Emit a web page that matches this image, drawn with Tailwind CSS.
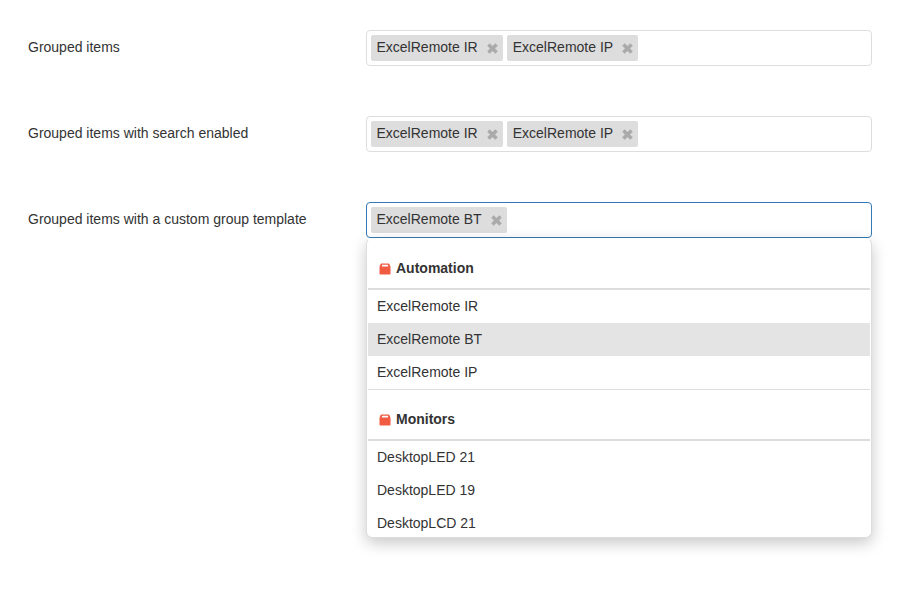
<!DOCTYPE html>
<html lang="en">
<head>
<meta charset="utf-8">
<title>Grouped items</title>
<script src="https://cdn.jsdelivr.net/npm/@tailwindcss/browser@4"></script>
</head>
<body class="h-[600px] overflow-hidden bg-white px-7 pt-[30px] font-['Liberation_Sans',Arial,sans-serif] text-sm text-[#333]">
<svg class="hidden">
  <symbol id="x" viewBox="0 0 10 10"><path d="M2.400 .3 5 2.800 7.600 .3 9.800 2.500 7.300 5 9.800 7.500 7.600 9.700 5 7.200 2.400 9.700 .2 7.500 2.700 5 .2 2.500Z" fill="#aaa"/></symbol>
  <symbol id="bag" viewBox="0 0 12 12"><path fill-rule="evenodd" d="M2.500 .5h7q.8 0 1 .8l.8 2q.2.5.2 1V10.700q0 .8-.8.8H1.300q-.8 0-.8-.8V4.300q0-.5.2-1l.8-2q.2-.8 1-.8ZM3.200 1.700 2.700 3.500H9.300L8.800 1.700Z" fill="#f05b41"/></symbol>
</svg>
<main class="flex flex-col gap-[50px]">
  <div class="flex h-9">
    <label class="w-[338px] pt-[7px] leading-5">Grouped items</label>
    <div class="flex w-[506px] gap-1 rounded border border-[#ddd] p-1">
      <span class="flex h-[26px] w-[132px] justify-between rounded-xs bg-[#ddd] pt-0.5 pr-[5px] pl-[5.5px] leading-5">ExcelRemote IR<svg class="mt-1.5 size-[11px]"><use href="#x"/></svg></span>
      <span class="flex h-[26px] w-[131px] justify-between rounded-xs bg-[#ddd] pt-0.5 pr-[5px] pl-[5.75px] leading-5">ExcelRemote IP<svg class="mt-1.5 size-[11px]"><use href="#x"/></svg></span>
    </div>
  </div>
  <div class="flex h-9">
    <label class="w-[338px] pt-[7px] leading-5">Grouped items with search enabled</label>
    <div class="flex w-[506px] gap-1 rounded border border-[#ddd] p-1">
      <span class="flex h-[26px] w-[132px] justify-between rounded-xs bg-[#ddd] pt-0.5 pr-[5px] pl-[5.5px] leading-5">ExcelRemote IR<svg class="mt-1.5 size-[11px]"><use href="#x"/></svg></span>
      <span class="flex h-[26px] w-[131px] justify-between rounded-xs bg-[#ddd] pt-0.5 pr-[5px] pl-[5.75px] leading-5">ExcelRemote IP<svg class="mt-1.5 size-[11px]"><use href="#x"/></svg></span>
    </div>
  </div>
  <div class="flex h-9">
    <label class="w-[338px] pt-[7px] leading-5">Grouped items with a custom group template</label>
    <div class="relative flex w-[506px] rounded border border-[#337ab7] p-1">
      <span class="flex h-[26px] w-[136px] justify-between rounded-xs bg-[#ddd] pt-0.5 pr-[5px] pl-[5.5px] leading-5">ExcelRemote BT<svg class="mt-1.5 size-[11px]"><use href="#x"/></svg></span>
      <div class="absolute top-[35px] -left-px h-[300px] w-[506px] overflow-hidden rounded-md border border-[#ddd] border-t-white bg-white px-px shadow-[0_5px_15px_rgba(0,0,0,0.22)]">
        <h3 class="flex h-[51px] items-end border-b-2 border-[#ddd] pb-2.5 pl-[11px] leading-5 font-bold"><svg class="mr-[5px] mb-[3px] size-3"><use href="#bag"/></svg>Automation</h3>
        <ul class="border-b border-[#ddd] leading-5">
          <li class="h-[33px] px-[9px] pt-1.5">ExcelRemote IR</li>
          <li class="h-[33px] bg-[#e4e4e4] px-[9px] pt-1.5">ExcelRemote BT</li>
          <li class="h-[33px] px-[9px] pt-1.5">ExcelRemote IP</li>
        </ul>
        <h3 class="flex h-[51px] items-end border-b-2 border-[#ddd] pb-2.5 pl-[11px] leading-5 font-bold"><svg class="mr-[5px] mb-[3px] size-3"><use href="#bag"/></svg>Monitors</h3>
        <ul class="leading-5">
          <li class="h-[33px] px-[9px] pt-1.5">DesktopLED 21</li>
          <li class="h-[33px] px-[9px] pt-1.5">DesktopLED 19</li>
          <li class="h-[33px] px-[9px] pt-1.5">DesktopLCD 21</li>
        </ul>
      </div>
    </div>
  </div>
</main>
</body>
</html>
